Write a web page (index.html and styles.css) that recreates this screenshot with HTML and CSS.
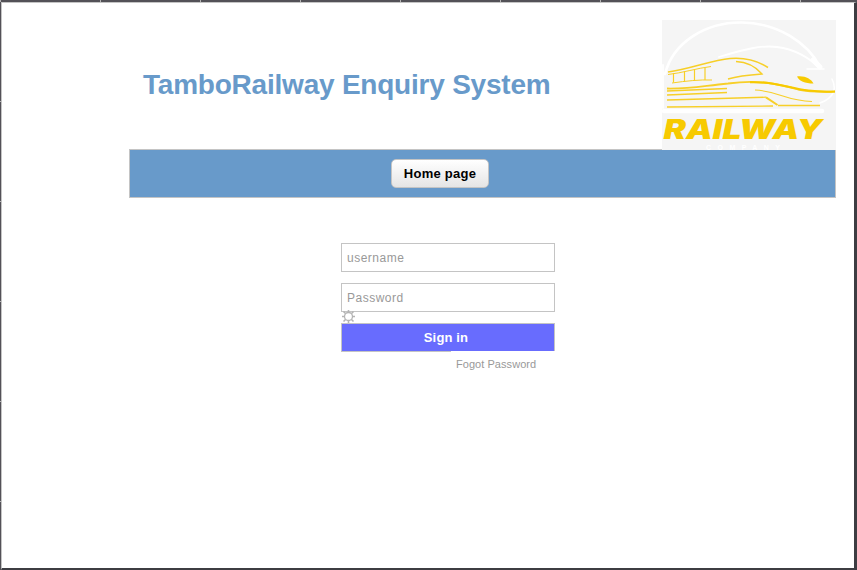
FILE: index.html
```html
<!DOCTYPE html>
<html lang="en">
<head>
<meta charset="utf-8">
<title>TamboRailway Enquiry System</title>
<link rel="stylesheet" href="styles.css">
</head>
<body>
<div class="frame">
  <div class="ruler ruler-top"></div>
  <div class="ruler ruler-left"></div>
  <main class="page">
    <header class="header">
      <h1 class="title">TamboRailway Enquiry System</h1>
      <svg class="logo" viewBox="662 20 174 130" role="img" aria-label="Railway company">
        <rect x="662" y="20" width="174" height="130" fill="#f5f5f5"/>
        <g fill="none" stroke="#fff" stroke-linecap="round">
          <path d="M665 74C673 42 706 22 742 22.500C778 23 808 43 820 67" stroke-width="2.600"/>
          <path d="M813 60L820 67" stroke-width="5"/>
          <path d="M719 57C745 49 762 45 777 47C794 49 810 58 818 67" stroke-width="1.800"/>
          <path d="M807 69H824M832 79C837 89 834 98 820 103" stroke-width="1.500"/>
          <path d="M663 65V108" stroke-width="1.800"/>
          <path d="M664 111H822" stroke-width="4.500"/>
        </g>
        <g fill="none" stroke="#f7cf28">
          <path d="M668 72C690 69 712 60 730 58.500C747 57 758 61 768 67.500" stroke-width="1.500"/>
          <path d="M668 74.500C682 73 698 68 711 66.500M672 83C686 81 700 79.500 712 80" stroke-width="1"/>
          <path d="M673.500 73V82.500M684.500 71V82M694.500 69.500V81M705 68V80" stroke-width="1.200"/>
          <path d="M736 61.500C748 62 756 67 762 74C748 75 738 76 728 79" stroke-width="1.400"/>
          <path d="M667 88.500C690 89 702 86 728 83.500C759 79 778 84 798 89.500C813 92.500 823 92 835 91.500" stroke-width="1.800"/>
          <path d="M750 82.300C784 81 795 93.500 835 91.500" stroke="#f7ca00" stroke-width="2"/>
          <path d="M667 91L727 88.500M667 95L727 92.500" stroke-width="1.700"/>
          <path d="M667 100L766 97.200M667 107L773 106M778 105.500H820" stroke-width="1.300"/>
          <path d="M755 90C778 91 786 101 812 101.500" stroke-width="1.100"/>
          <path d="M766 97.300L777.500 105" stroke-width="2"/>
        </g>
        <path d="M797 76.500C805 75.500 811 79 813.500 83.500C805 83.500 799 81 797 76.500Z" fill="#f7ca00"/>
        <text class="logo-name" x="663.500" y="139" textLength="159" lengthAdjust="spacingAndGlyphs">RAILWAY</text>
        <text class="logo-sub" x="706" y="149.500" textLength="74">COMPANY</text>
      </svg>
    </header>
    <nav class="nav"><a class="nav-button">Home page</a></nav>
    <form class="login">
      <input class="field" type="text" placeholder="username">
      <input class="field" type="text" placeholder="Password">
      <div class="gear-row">
        <svg class="gear" viewBox="0 0 13 13">
          <g fill="none" stroke="#b4b4b4" stroke-width="1.600">
            <circle cx="6.500" cy="6.500" r="4" stroke-width="1.300"/>
            <path d="M6.500 0V2.500M6.500 10.500V13M0 6.500H2.500M10.500 6.500H13M1.500 1.500L3.500 3.500M9.500 9.500L11.500 11.500M1.500 11.500L3.500 9.500M9.500 3.500L11.500 1.500"/>
          </g>
        </svg>
      </div>
      <button class="submit" type="button">Sign in</button>
      <a class="forgot">Fogot Password</a>
    </form>
  </main>
</div>
</body>
</html>
```

FILE: styles.css
```css
* { box-sizing: border-box; }
body {
  margin: 0;
  background: #fff;
  font-family: "Liberation Sans", Arial, sans-serif;
}
.frame {
  display: grid;
  grid-template: 2px 568px / 1px 856px;
  width: 857px;
  height: 570px;
  overflow: hidden;
  background: #535157;
}
.ruler-top {
  grid-column: 1 / 3;
  background: repeating-linear-gradient(90deg, #b4b4b4 0 1px, #535157 1px 100px);
}
.ruler-left {
  background: repeating-linear-gradient(180deg, #535157 0 99px, #b4b4b4 99px 100px);
}
.page {
  border: solid #3d3d42;
  border-width: 1px 3px 2px 1px;
  border-top-color: #c4c4c4;
  border-left-color: #c4c4c4;
  padding: 17px 18px 0 127px;
  background: #fff;
}
.header {
  display: flex;
  justify-content: space-between;
  height: 129px;
}
.title {
  margin: 49px 0 0 14px;
  color: #689aca;
  font-size: 28px;
  line-height: 32px;
  letter-spacing: -0.22px;
  white-space: nowrap;
}
.logo {
  position: relative;
  z-index: 1;
  flex: none;
  width: 174px;
  height: 130px;
}
.logo-name {
  fill: #f7ca00;
  font: italic 900 26.500px Inter, "Open Sans", sans-serif;
}
.logo-sub {
  fill: #fff;
  font: bold 7px "Liberation Sans", sans-serif;
}
.nav {
  display: flex;
  width: 707px;
  height: 49px;
  padding: 9px 0 0 261px;
  border: 1px solid #c4c4c4;
  background: #689aca;
}
.nav-button {
  width: 98px;
  height: 29px;
  border: 1px solid #c4c4c4;
  border-radius: 5px;
  background: linear-gradient(#fff, #e5e5e5);
  color: #000;
  font-size: 13px;
  font-weight: bold;
  line-height: 27px;
  text-align: center;
  letter-spacing: 0.25px;
}
.login {
  display: flex;
  flex-direction: column;
  width: 214px;
  margin: 45px 0 0 212px;
}
.field {
  width: 214px;
  height: 29px;
  margin: 0 0 11px;
  padding: 0 5px;
  border: 1px solid #c4c4c4;
  border-radius: 0;
  background: #fff;
  font: 12px "Liberation Sans", Arial, sans-serif;
  letter-spacing: 0.5px;
}
.field::placeholder { color: #999; opacity: 1; }
.gear-row { height: 11px; margin-top: -11px; }
.gear {
  display: block;
  position: relative;
  top: -2px;
  left: 1px;
  width: 13px;
  height: 13px;
}
.submit {
  height: 29px;
  padding: 0 4px 0 0;
  border: 1px solid #c4c4c4;
  background: #686cfe;
  color: #fff;
  font: bold 13px/27px "Liberation Sans", Arial, sans-serif;
  letter-spacing: 0.15px;
}
.forgot {
  position: relative;
  align-self: flex-end;
  width: 104px;
  height: 27px;
  margin-top: -1px;
  padding-left: 5px;
  background: #fff;
  color: #999;
  font-size: 11px;
  line-height: 27px;
  letter-spacing: 0.05px;
  white-space: nowrap;
}
```
